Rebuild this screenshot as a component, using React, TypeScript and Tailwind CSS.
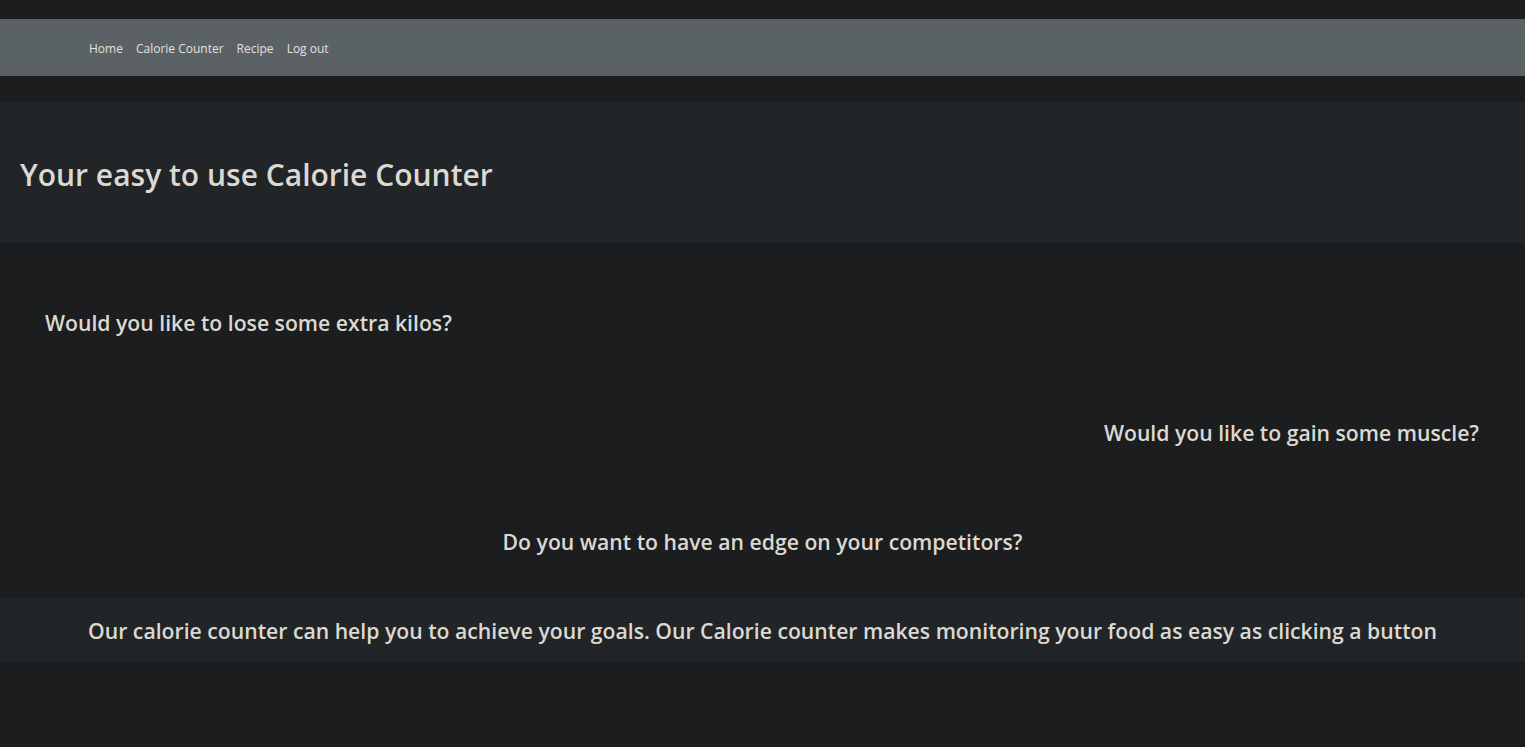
import React from "react";

const links = ["Home", "Calorie Counter", "Recipe", "Log out"];

export default function App() {
  return (
    <div className="min-h-[747px] bg-[#1b1d1f] text-[#dcd8d2] font-['Open_Sans',sans-serif]">
      <div className="h-[19px]" />
      <nav className="h-[57px] bg-[#5b6266] flex items-center pl-[89px] pt-[2px] gap-[13px] text-[12px] text-[#e4e1dc]">
        {links.map((l) => (
          <a key={l} href="#" className="leading-none">
            {l}
          </a>
        ))}
      </nav>
      <div className="h-[26px]" />
      <header className="h-[141px] bg-[#212527] flex items-center px-[20px] pt-[4px]">
        <h1 className="text-[30px] font-semibold leading-none">Your easy to use Calorie Counter</h1>
      </header>
      <section className="flex flex-col text-[21.2px] font-semibold">
        <h3 className="h-[110px] pt-[69px] pl-[45px] leading-none">Would you like to lose some extra kilos?</h3>
        <h3 className="h-[110px] pt-[69px] pr-[46px] text-right leading-none">Would you like to gain some muscle?</h3>
        <h3 className="h-[135px] pt-[68px] text-center leading-none">Do you want to have an edge on your competitors?</h3>
      </section>
      <div className="h-[64px] bg-[#212527] flex items-center justify-center pt-[2px] text-[21.2px] font-semibold">
        Our calorie counter can help you to achieve your goals. Our Calorie counter makes monitoring your food as easy as clicking a button
      </div>
    </div>
  );
}
